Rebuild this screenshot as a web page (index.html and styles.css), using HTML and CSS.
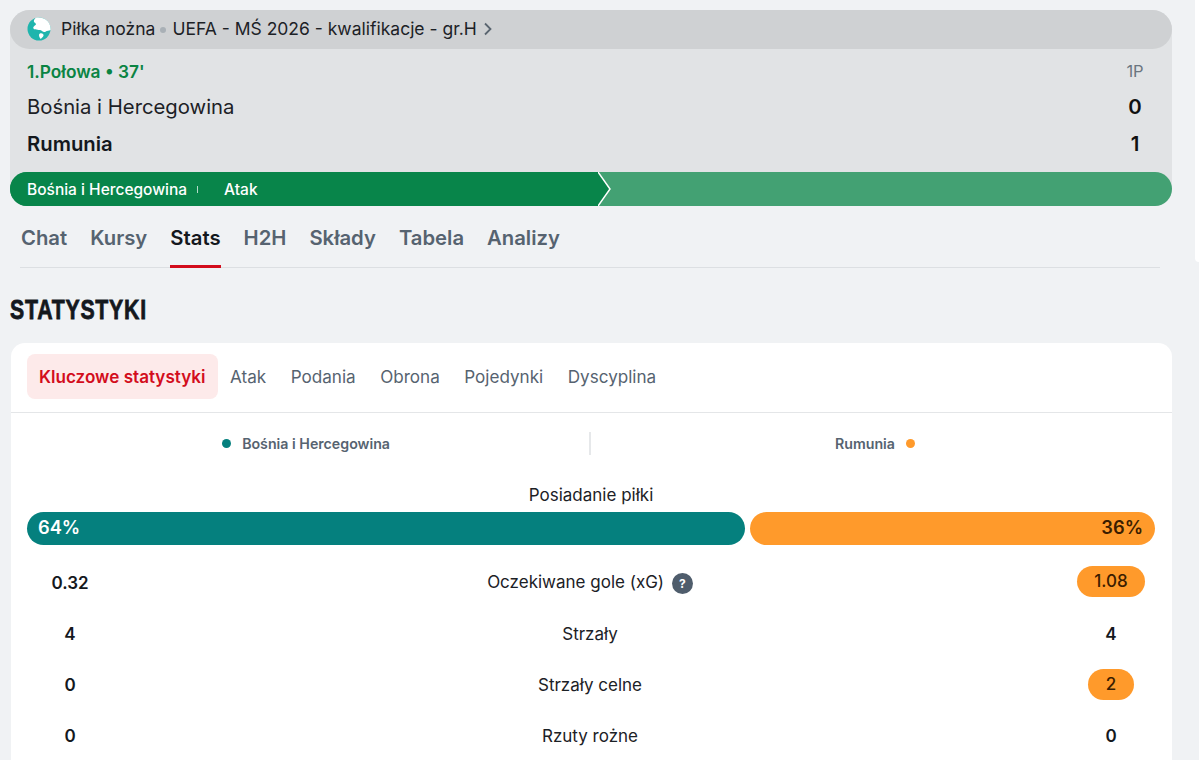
FILE: index.html
```html
<!DOCTYPE html>
<html lang="pl">
<head>
<meta charset="utf-8">
<title>Statystyki</title>
<link rel="stylesheet" href="styles.css">
</head>
<body>
<div class="page">
  <main class="main">
    <section class="match">
      <div class="crumb">
        <svg class="globe" viewBox="0 0 24 24" width="24" height="24" aria-hidden="true">
          <circle cx="12" cy="12" r="11.500" fill="#1fb5ad"/>
          <path fill="#fff" d="M9 .8C13-.2 18 1.200 21 4.500C23 7 23.800 10 23.600 13C22 14 20 13.600 18.800 14.600C17.600 15.600 16 15 15 14C13.800 12.800 12 13.600 10.500 12.800C9 12 7.500 13 6.500 11.500C5.500 10 7.500 9 8.500 8C9.500 7 8.500 6 7.500 5.500C6.500 5 6.500 2.500 9 .8Z"/>
          <path fill="#fff" d="M13 16.500C15 16 17 17 16.500 18.800C16 20.500 14.500 21 13.800 22C12.500 21 12 19 12 18C12 17.200 12.400 16.700 13 16.500Z"/>
        </svg>
        <span class="crumb-text">Piłka nożna</span>
        <span class="crumb-dot"></span>
        <span class="crumb-text">UEFA - MŚ 2026 - kwalifikacje - gr.H</span>
        <svg class="chev" viewBox="0 0 10 16" width="10" height="16" aria-hidden="true">
          <path d="M2 2.500l5.500 5.500-5.500 5.500" fill="none" stroke="#5a6570" stroke-width="1.800"/>
        </svg>
      </div>
      <div class="score-grid">
        <div class="status">1.Połowa • 37'</div>
        <div class="period">1P</div>
        <div class="team">Bośnia i Hercegowina</div>
        <div class="score">0</div>
        <div class="team team-lead">Rumunia</div>
        <div class="score">1</div>
      </div>
      <div class="momentum">
        <div class="momentum-fill">
          <span class="momentum-team">Bośnia i Hercegowina</span>
          <span class="momentum-sep"></span>
          <span>Atak</span>
        </div>
        <svg class="momentum-tip" viewBox="0 0 13 34" width="13" height="34" aria-hidden="true">
          <path d="M0 0L12 17L0 34Z" fill="#08854a"/>
          <path d="M0 0L12 17L0 34" fill="none" stroke="#fff" stroke-width="1.500"/>
        </svg>
      </div>
    </section>

    <nav class="tabs">
      <a class="tab">Chat</a>
      <a class="tab">Kursy</a>
      <a class="tab tab-active">Stats</a>
      <a class="tab">H2H</a>
      <a class="tab">Składy</a>
      <a class="tab">Tabela</a>
      <a class="tab">Analizy</a>
    </nav>

    <h1 class="title">STATYSTYKI</h1>

    <section class="card">
      <div class="subtabs">
        <a class="subtab subtab-active">Kluczowe statystyki</a>
        <a class="subtab">Atak</a>
        <a class="subtab">Podania</a>
        <a class="subtab">Obrona</a>
        <a class="subtab">Pojedynki</a>
        <a class="subtab">Dyscyplina</a>
      </div>
      <div class="legend">
        <div class="legend-side legend-home"><i class="dot dot-home"></i><span>Bośnia i Hercegowina</span></div>
        <div class="legend-side legend-away"><span>Rumunia</span><i class="dot dot-away"></i></div>
      </div>
      <div class="stats">
        <div class="poss-label">Posiadanie piłki</div>
        <div class="poss">
          <div class="poss-bar poss-home">64%</div>
          <div class="poss-bar poss-away">36%</div>
        </div>
        <div class="row row-first">
          <div class="val val-text">0.32</div>
          <div class="label">Oczekiwane gole (xG) <span class="help">?</span></div>
          <div class="val"><span class="pill">1.08</span></div>
        </div>
        <div class="row">
          <div class="val val-text">4</div>
          <div class="label">Strzały</div>
          <div class="val val-text">4</div>
        </div>
        <div class="row">
          <div class="val val-text">0</div>
          <div class="label">Strzały celne</div>
          <div class="val"><span class="pill">2</span></div>
        </div>
        <div class="row">
          <div class="val val-text">0</div>
          <div class="label">Rzuty rożne</div>
          <div class="val val-text">0</div>
        </div>
      </div>
    </section>
  </main>
  <aside class="side"></aside>
</div>
</body>
</html>
```

FILE: styles.css
```css
* { box-sizing: border-box; }
html, body { margin: 0; height: 760px; overflow: hidden; }
body {
  background: #f0f2f4;
  color: #14181d;
  font-family: Inter, "Liberation Sans", sans-serif;
}
.page { display: flex; align-items: flex-start; padding-left: 10px; gap: 23px; }
.main { width: 1162px; flex: none; padding-top: 10px; }
.side { flex: 1; height: 262px; background: #fff; border-bottom-left-radius: 12px; }

.match { background: #e1e3e5; border-radius: 20px 20px 17px 17px; }
.crumb {
  height: 39px;
  display: flex;
  align-items: center;
  padding-left: 17px;
  background: #cfd1d3;
  border-radius: 20px;
  font-size: 17.5px;
  color: #1c2126;
}
.crumb-text { margin-top: -2px; }
.globe { flex: none; margin: -1px 10px 0 0; }
.crumb-dot { width: 6px; height: 6px; margin: 0 6px 0 5px; border-radius: 50%; background: #a9b0b6; }
.chev { margin: -2px 0 0 6px; }

.score-grid {
  display: grid;
  grid-template-columns: 1fr 30px;
  grid-auto-rows: 37px;
  grid-template-rows: 34px;
  align-items: center;
  padding: 5px 22px 10px 17px;
  height: 123px;
}
.status { font-size: 17.3px; font-weight: 600; color: #0a8443; }
.period { font-size: 16.5px; color: #6b7580; text-align: center; }
.team { font-size: 20.3px; color: #1c2126; }
.team-lead { font-weight: 600; color: #14181d; }
.score { font-size: 20.4px; font-weight: 600; text-align: center; color: #111; }

.momentum {
  height: 34px;
  display: flex;
  background: #43a173;
  border-radius: 17px;
  overflow: hidden;
}
.momentum-fill {
  width: 588px;
  flex: none;
  display: flex;
  align-items: center;
  padding-left: 17px;
  background: #08854a;
  color: #fff;
  font-size: 15.5px;
  font-weight: 500;
}
.momentum-sep { width: 1px; height: 7px; margin: 0 26px 0 10px; background: rgba(255,255,255,.7); }
.momentum-tip { flex: none; }

.tabs {
  display: flex;
  gap: 23px;
  height: 62px;
  margin: 0 12px 0 10px;
  padding-left: 1px;
  border-bottom: 1px solid #dcdfe2;
}
.tab {
  height: 62px;
  padding-top: 20px;
  font-size: 20.3px;
  line-height: 24px;
  font-weight: 600;
  color: #566370;
}
.tab-active { color: #14181d; border-bottom: 3px solid #d30d1c; }

.title {
  margin: 25px 0 17px;
  font-family: "Liberation Sans", sans-serif;
  font-size: 28px;
  line-height: 33px;
  font-weight: 700;
  letter-spacing: 1px;
  color: #14181d;
  transform: scaleX(.76);
  transform-origin: left center;
  -webkit-text-stroke: .8px #14181d;
}

.card { margin-left: 1px; background: #fff; border-radius: 14px 14px 0 0; height: 417px; }
.subtabs {
  display: flex;
  align-items: flex-start;
  gap: .5px;
  height: 70px;
  padding: 11px 16px 13px;
  border-bottom: 1px solid #e4e6e8;
}
.subtab { padding: 0 12px; font-size: 17.1px; color: #566370; line-height: 45px; }
.subtab-active {
  background: #fdeaea;
  color: #d30d1c;
  font-weight: 600;
  border-radius: 8px;
}
.legend { display: grid; grid-template-columns: 1fr 1fr; height: 23px; margin-top: 19px; padding-right: 1px; }
.legend-side {
  display: flex;
  align-items: center;
  gap: 11px;
  font-size: 14.2px;
  font-weight: 600;
  color: #566370;
}
.legend-home { justify-content: flex-end; padding-right: 199px; border-right: 2px solid #e6e8ea; }
.legend-away { padding-left: 244px; }
.dot { width: 9px; height: 9px; border-radius: 50%; }
.dot-home { background: #05807e; }
.dot-away { background: #ff9a2b; }

.stats { padding: 0 17px 0 16px; }
.poss-label { margin-top: 30px; text-align: center; font-size: 17px; line-height: 20px; color: #1c2126; }
.poss { display: flex; gap: 5px; margin-top: 7px; }
.poss-bar {
  height: 33px;
  line-height: 31px;
  border-radius: 17px;
  font-size: 18.3px;
  font-weight: 600;
  padding: 0 12px 0 11px;
}
.poss-home { width: 718px; background: #05807e; color: #fff; }
.poss-away { flex: 1; background: #ff9a2b; color: #3b1d00; text-align: right; }

.row {
  display: grid;
  grid-template-columns: 86px 1fr 88px;
  align-items: center;
  height: 51.25px;
  font-size: 17px;
}
.row-first { margin-top: 11px; }
.val { text-align: center; font-weight: 600; color: #14181d; }
.val-text, .label { padding-top: 2px; }
.label { text-align: center; color: #1c2126; }
.pill {
  display: inline-block;
  height: 31px;
  line-height: 31px;
  padding: 0 17.5px;
  border-radius: 16px;
  background: #ff9a2b;
  font-weight: 500;
  color: #3b1d00;
}
.help {
  display: inline-block;
  width: 21px;
  height: 21px;
  margin-left: 3px;
  border-radius: 50%;
  background: #4f5d6c;
  color: #fff;
  font-size: 12px;
  font-weight: 700;
  line-height: 21px;
  text-align: center;
}
```
